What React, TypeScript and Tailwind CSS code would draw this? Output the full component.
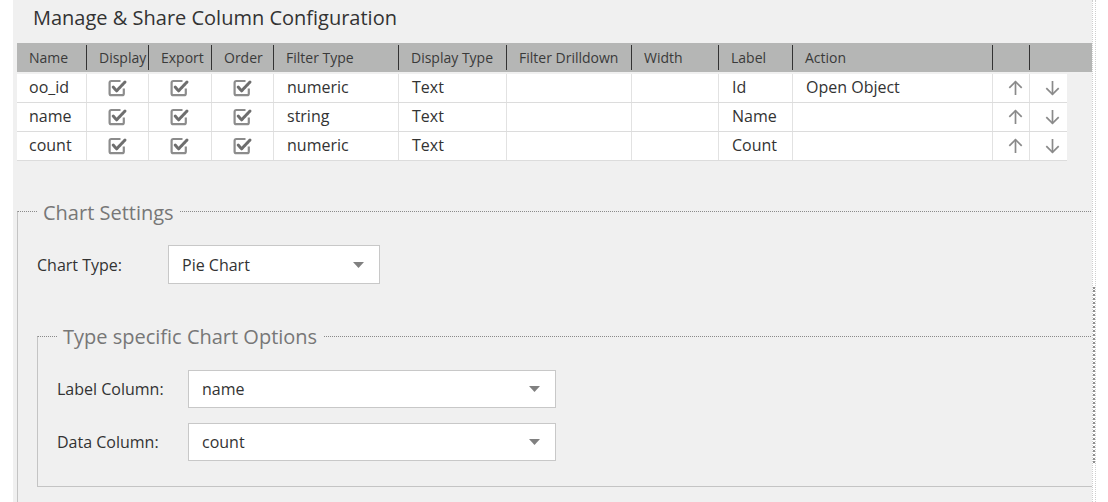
import React from 'react';

const BODY_COLS = 'grid grid-cols-[70px_62px_63px_62px_125px_108px_125px_87px_74px_200px_37px_37px]';
const HEAD_COLS = 'grid grid-cols-[70px_62px_63px_62px_125px_108px_125px_87px_74px_200px_37px_62px]';

const headers = ['Name', 'Display', 'Export', 'Order', 'Filter Type', 'Display Type', 'Filter Drilldown', 'Width', 'Label', 'Action', '', ''];

const rows = [
  { name: 'oo_id', filter: 'numeric', display: 'Text', label: 'Id', action: 'Open Object' },
  { name: 'name', filter: 'string', display: 'Text', label: 'Name', action: '' },
  { name: 'count', filter: 'numeric', display: 'Text', label: 'Count', action: '' },
];

function CheckIcon() {
  return (
    <svg width="20" height="18" viewBox="0 0 20 18" fill="none">
      <path d="M12.5 2 H3.4 A1.8 1.8 0 0 0 1.6 3.8 V14.4 A1.8 1.8 0 0 0 3.4 16.2 H14 A1.8 1.8 0 0 0 15.8 14.4 V9.5" stroke="#8c8c8c" strokeWidth="2.2" />
      <path d="M5.2 8 L8.6 11.8 L17 3" stroke="#6e6e6e" strokeWidth="3" strokeLinecap="round" strokeLinejoin="round" strokeDasharray="1.3 0.6" />
    </svg>
  );
}

function Arrow({ down }: { down?: boolean }) {
  return (
    <svg width="15" height="16" viewBox="0 0 15 16" fill="none" className={down ? 'rotate-180' : ''}>
      <path d="M7.5 1.5 V15" stroke="#8a8a8a" strokeWidth="1.7" />
      <path d="M1.3 7.8 L7.5 1.6 L13.7 7.8" stroke="#8a8a8a" strokeWidth="1.7" />
    </svg>
  );
}

function Caret() {
  return (
    <svg width="11" height="6" viewBox="0 0 11 6">
      <path d="M0 0 H11 L5.5 6 Z" fill="#808080" />
    </svg>
  );
}

function Select({ value, wide }: { value: string; wide?: boolean }) {
  return (
    <div
      className={`flex items-center justify-between bg-white border border-[#c8c8c8] pl-[13px] pr-[15px] text-[16px] text-[#333] ${
        wide ? 'w-[368px] h-[38px]' : 'w-[212px] h-[39px]'
      }`}
    >
      <span>{value}</span>
      <Caret />
    </div>
  );
}

function FormRow({ label, children }: { label: string; children: React.ReactNode }) {
  return (
    <div className="flex items-center">
      <div className="w-[131px] text-[16px] text-[#333]">{label}</div>
      {children}
    </div>
  );
}

export default function App() {
  return (
    <div className="flex w-[1108px] h-[502px] bg-white overflow-hidden font-['Open_Sans',sans-serif]">
      <div className="w-[13px] shrink-0 bg-white" />

      <div className="w-[1079px] shrink-0 bg-[#f0f0f0] overflow-hidden">
        <div className="h-[43px] pt-[5px] pl-[20px]">
          <h1 className="text-[20px] leading-[26px] text-[#333]">Manage &amp; Share Column Configuration</h1>
        </div>

        <div className="ml-[4px]">
          <div className={`${HEAD_COLS} w-[1075px] h-[29px] bg-[#b5b6b5] text-[14px] text-[#3a3a3a]`}>
            {headers.map((h, i) => (
              <div key={i} className="py-[2px]">
                <div className={`h-full flex items-center pl-[12px] whitespace-nowrap ${i < 11 ? 'border-r border-[#333]' : ''}`}>{h}</div>
              </div>
            ))}
          </div>

          <div className="mt-[2px] w-[1050px] bg-white text-[16px] text-[#333]">
            {rows.map((r) => (
              <div key={r.name} className={`${BODY_COLS} h-[29px] border-b border-[#dcdcdc] leading-[22px]`}>
                <div className="flex items-center pb-[2px] pl-[12px] border-r border-[#e2e2e2]">{r.name}</div>
                {[0, 1, 2].map((k) => (
                  <div key={k} className="flex items-center justify-center border-r border-[#e2e2e2]">
                    <CheckIcon />
                  </div>
                ))}
                <div className="flex items-center pb-[2px] pl-[13px] border-r border-[#e2e2e2]">{r.filter}</div>
                <div className="flex items-center pb-[2px] pl-[13px] border-r border-[#e2e2e2]">{r.display}</div>
                <div className="border-r border-[#e2e2e2]" />
                <div className="border-r border-[#e2e2e2]" />
                <div className="flex items-center pb-[2px] pl-[13px] border-r border-[#e2e2e2]">{r.label}</div>
                <div className="flex items-center pb-[2px] pl-[13px] border-r border-[#e2e2e2]">{r.action}</div>
                <div className="flex items-center pl-[15px] border-r border-[#e2e2e2]">
                  <Arrow />
                </div>
                <div className="flex items-center pl-[15px]">
                  <Arrow down />
                </div>
              </div>
            ))}
          </div>
        </div>

        <fieldset className="mt-[37px] ml-[4px] w-[1100px] border-t border-l border-b border-solid border-[#c4c4c4] [border-top-style:dotted] border-t-[#8a8a8a] pb-[20px]">
          <legend className="ml-[19px] px-[6px] text-[20px] leading-[26px] text-[#777]">
            <span className="relative top-[2px]">Chart Settings</span>
          </legend>
          <div className="pl-[19px] pt-[21px]">
            <FormRow label="Chart Type:">
              <Select value="Pie Chart" />
            </FormRow>

            <fieldset className="mt-[39px] w-[1100px] border-t border-l border-b border-solid border-[#c4c4c4] [border-top-style:dotted] border-t-[#8a8a8a] pb-[25px]">
              <legend className="ml-[19px] px-[6px] text-[20px] leading-[26px] text-[#777]">
                <span className="relative top-[1px]">Type specific Chart Options</span>
              </legend>
              <div className="pl-[19px] pt-[21px] flex flex-col gap-[15px]">
                <FormRow label="Label Column:">
                  <Select value="name" wide />
                </FormRow>
                <FormRow label="Data Column:">
                  <Select value="count" wide />
                </FormRow>
              </div>
            </fieldset>
          </div>
        </fieldset>
      </div>

      <div className="w-[4px] shrink-0 border-x border-dotted border-[#cfcfcf]">
        <div className="mt-[287px] h-[176px] border-l-2 border-dotted border-[#8f8f8f]" />
      </div>
      <div className="flex-1 bg-white" />
    </div>
  );
}
